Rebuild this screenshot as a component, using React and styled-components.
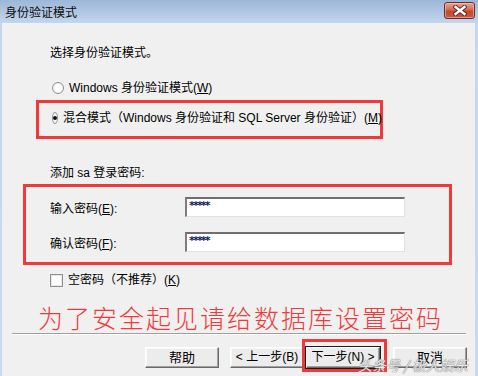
import styled, { createGlobalStyle } from "styled-components";

const GlobalStyle = createGlobalStyle`
  html, body {
    margin: 0;
    padding: 0;
  }
  body {
    width: 478px;
    height: 376px;
    overflow: hidden;
    font-family: "Liberation Sans", "Noto Sans CJK SC", sans-serif;
    font-size: 12px;
    color: #000;
  }
`;

const RED = "#f03a3a";

const Window = styled.div`
  position: relative;
  width: 478px;
  height: 376px;
  display: flex;
  flex-direction: column;
  background: linear-gradient(#9db7d7, #c2d6ed 23px, #c6daf0);
  overflow: hidden;
`;

const TitleBar = styled.div`
  height: 23px;
  flex-shrink: 0;
  display: flex;
  align-items: center;
  justify-content: space-between;
  padding: 0 3px 0 5px;
`;

const Title = styled.span`
  font-family: "Noto Sans CJK SC", sans-serif;
  font-size: 12px;
  line-height: 16px;
  color: #0c0c0c;
  margin-top: 1px;
`;

const CloseButton = styled.div`
  width: 31px;
  height: 17px;
  margin-top: -3px;
  box-sizing: border-box;
  border: 1px solid #6b2d24;
  border-radius: 3px;
  background: linear-gradient(#e8a595, #d46a55 45%, #c3472f 55%, #c85a42);
  box-shadow: inset 0 0 0 1px rgba(255, 220, 210, 0.45);
  display: flex;
  align-items: center;
  justify-content: center;
`;

const Body = styled.div`
  flex: 1;
  margin: 0 3px 0 2px;
  background: #f0f0f0;
  display: flex;
  flex-direction: column;
`;

const Content = styled.div`
  display: flex;
  flex-direction: column;
  align-items: flex-start;
  padding-left: 48px;
`;

const Text = styled.div`
  line-height: 16px;
  height: 16px;
  white-space: nowrap;
  margin-top: ${(p) => p.$top || 0}px;
`;

const OptionRow = styled.label`
  display: flex;
  align-items: center;
  gap: 5px;
  height: 16px;
  line-height: 16px;
  white-space: nowrap;
  margin-top: ${(p) => p.$top || 0}px;
  margin-left: ${(p) => p.$left || 0}px;
`;

const Radio = styled.span`
  width: 12px;
  height: 12px;
  box-sizing: border-box;
  border-radius: 50%;
  border: 1px solid #8f9090;
  background: radial-gradient(circle at 50% 50%, #ffffff 40%, #e4e4e4 100%);
  display: flex;
  align-items: center;
  justify-content: center;

  &::after {
    content: "";
    width: 4px;
    height: 4px;
    border-radius: 50%;
    background: ${(p) => (p.$checked ? "#111" : "transparent")};
  }
`;

const Checkbox = styled.span`
  width: 13px;
  height: 13px;
  box-sizing: border-box;
  border: 1px solid #8f9090;
  background: #fff;
  box-shadow: inset 0 0 0 1px #e6e6e6;
`;

const Key = styled.span`
  text-decoration: underline;
`;

const MarkBox = styled.div`
  box-sizing: border-box;
  border: 3px solid ${RED};
  margin-top: ${(p) => p.$top}px;
  margin-left: ${(p) => p.$left}px;
  width: ${(p) => p.$width}px;
  padding: ${(p) => p.$pad};
  display: flex;
  flex-direction: column;
  gap: 15px;
`;

const FieldRow = styled.div`
  display: grid;
  grid-template-columns: 135px 220px;
  align-items: center;
  height: 20px;
`;

const Input = styled.div`
  height: 20px;
  box-sizing: border-box;
  background: #fff;
  border-top: 2px solid #6f6f6f;
  border-left: 2px solid #7d7d7d;
  border-right: 1px solid #e2e2e2;
  border-bottom: 1px solid #e2e2e2;
  padding-left: 2px;
  font-family: "DejaVu Sans", sans-serif;
  font-size: 11px;
  font-weight: bold;
  line-height: 13px;
  letter-spacing: -1.8px;
  color: #0e1c5c;
`;

const Notice = styled.div`
  margin-top: 14px;
  margin-left: -12px;
  height: 30px;
  line-height: 30px;
  font-family: "Noto Sans CJK SC", sans-serif;
  font-size: 25px;
  font-weight: 300;
  letter-spacing: 2px;
  color: ${RED};
  white-space: nowrap;
`;

const Separator = styled.div`
  margin: 1px 9px 0 10px;
  height: 1px;
  background: #a0a0a0;
  border-bottom: 1px solid #ffffff;
`;

const ButtonRow = styled.div`
  display: flex;
  justify-content: flex-end;
  padding-right: 8px;
  margin-top: 12px;
`;

const Slot = styled.div`
  position: relative;
  margin-left: ${(p) => p.$gap || 0}px;

  &::after {
    content: "";
    display: ${(p) => (p.$marked ? "block" : "none")};
    position: absolute;
    left: -4px;
    right: -7px;
    top: -8px;
    bottom: -4px;
    border: 3px solid ${RED};
    pointer-events: none;
  }
`;

const Button = styled.button`
  width: 74px;
  height: 21px;
  box-sizing: border-box;
  padding: 0;
  background: #ececec;
  border: 1px solid;
  border-color: #ffffff #696969 #696969 #ffffff;
  box-shadow: ${(p) =>
    p.$default
      ? "0 0 0 1px #1a1a1a, inset -1px -1px 0 #a0a0a0"
      : "inset -1px -1px 0 #a0a0a0, inset 1px 1px 0 #f8f8f8"};
  font-family: "Liberation Sans", "Noto Sans CJK SC", sans-serif;
  font-size: ${(p) => p.$size || 13}px;
  line-height: 17px;
  color: #000;
  white-space: nowrap;
`;

const Watermark = styled.div`
  position: absolute;
  left: 358px;
  top: 357px;
  font-family: "Noto Sans CJK SC", sans-serif;
  font-size: 14px;
  line-height: 16px;
  font-style: italic;
  color: rgba(255, 255, 255, 0.85);
  text-shadow: 0 0 1px #777, 0 0 1px #777;
  white-space: nowrap;
`;

const CloseIcon = () => (
  <svg width="14" height="11" viewBox="0 0 14 11">
    <path d="M2.5 2 L11.5 9 M11.5 2 L2.5 9" stroke="#5e2219" strokeWidth="4.2" strokeLinecap="square" />
    <path d="M2.5 2 L11.5 9 M11.5 2 L2.5 9" stroke="#ffffff" strokeWidth="2.4" strokeLinecap="square" />
  </svg>
);

export default function App() {
  return (
    <>
      <GlobalStyle />
      <Window>
        <TitleBar>
          <Title>身份验证模式</Title>
          <CloseButton>
            <CloseIcon />
          </CloseButton>
        </TitleBar>

        <Body>
          <Content>
            <Text $top={22}>选择身份验证模式。</Text>

            <OptionRow $top={19} $left={2}>
              <Radio />
              <span>
                Windows 身份验证模式(<Key>W</Key>)
              </span>
            </OptionRow>

            <MarkBox $top={4} $left={-14} $width={347} $pad="7px 0 10px 13px">
              <OptionRow>
                <Radio $checked />
                <span>
                  混合模式（Windows 身份验证和 SQL Server 身份验证）(<Key>M</Key>)
                </span>
              </OptionRow>
            </MarkBox>

            <Text $top={26}>添加 sa 登录密码:</Text>

            <MarkBox $top={3} $left={-27} $width={429} $pad="10px 0 10px 24px">
              <FieldRow>
                <span>
                  输入密码(<Key>E</Key>):
                </span>
                <Input>*****</Input>
              </FieldRow>
              <FieldRow>
                <span>
                  确认密码(<Key>F</Key>):
                </span>
                <Input>*****</Input>
              </FieldRow>
            </MarkBox>

            <OptionRow $top={7}>
              <Checkbox />
              <span>
                空密码（不推荐）(<Key>K</Key>)
              </span>
            </OptionRow>

            <Notice>为了安全起见请给数据库设置密码</Notice>
          </Content>

          <Separator />

          <ButtonRow>
            <Slot>
              <Button>帮助</Button>
            </Slot>
            <Slot $gap={11}>
              <Button $size={12}>&lt; 上一步(B)</Button>
            </Slot>
            <Slot $gap={2} $marked>
              <Button $size={12} $default>
                下一步(N) &gt;
              </Button>
            </Slot>
            <Slot $gap={13}>
              <Button>取消</Button>
            </Slot>
          </ButtonRow>
        </Body>

        <Watermark>头条号 / 极人娱乐</Watermark>
      </Window>
    </>
  );
}
